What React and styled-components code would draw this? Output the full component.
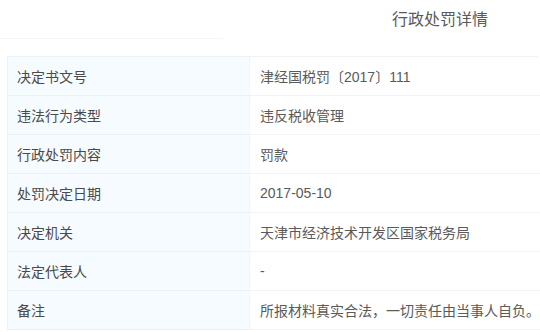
import React from 'react';
import styled, {createGlobalStyle} from 'styled-components';

const GlobalStyle = createGlobalStyle`
    body {
        margin: 0;
        background: #ffffff;
        font-family: "Liberation Sans", "Noto Sans CJK SC", sans-serif;
        color: #333333;
    }
`

const Page = styled.div`
    width: 540px;
    height: 332px;
    overflow: hidden;
`

const Header = styled.div`
    display: flex;
    justify-content: flex-end;
    height: 38px;
    padding-right: 52px;
`

const Title = styled.h3`
    margin: 0;
    padding-top: 2px;
    font-size: 16px;
    font-weight: normal;
    line-height: 36px;
    color: #5a5a5a;
`

const Divider = styled.div`
    width: 223px;
    height: 1px;
    background: #f4f4f4;
`

const Table = styled.div`
    display: grid;
    grid-template-columns: 242px 1fr;
    width: 530px;
    margin: 17px 0 0 7px;
    border-top: 1px solid #eef3f6;
    border-left: 1px solid #eef3f6;
`

const Label = styled.div`
    height: 38px;
    display: flex;
    align-items: center;
    padding-left: 9px;
    font-size: 14px;
    color: #4a4a4a;
    background: #f5fbff;
    border-bottom: 1px solid #eaf1f5;
    border-right: 1px solid #f2f5f7;
`

const Value = styled.div`
    height: 38px;
    display: flex;
    align-items: center;
    padding-left: 10px;
    font-size: 14px;
    color: #5a5a5a;
    white-space: nowrap;
    border-bottom: 1px solid #f3f3f3;
`

const rows = [
    ['决定书文号', '津经国税罚〔2017〕111'],
    ['违法行为类型', '违反税收管理'],
    ['行政处罚内容', '罚款'],
    ['处罚决定日期', '2017-05-10'],
    ['决定机关', '天津市经济技术开发区国家税务局'],
    ['法定代表人', '-'],
    ['备注', '所报材料真实合法，一切责任由当事人自负。'],
]

function App() {
    return (
        <Page>
            <GlobalStyle/>
            <Header>
                <Title>行政处罚详情</Title>
            </Header>
            <Divider/>
            <Table>
                {rows.map(([label, value]) => (
                    <React.Fragment key={label}>
                        <Label>{label}</Label>
                        <Value>{value}</Value>
                    </React.Fragment>
                ))}
            </Table>
        </Page>
    );
}

export default App;
